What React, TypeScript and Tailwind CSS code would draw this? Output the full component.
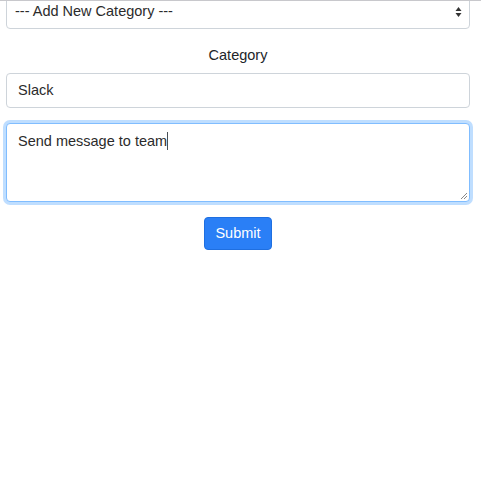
import React from "react";

export default function App() {
  return (
    <div
      className="min-h-[500px] bg-white border-t border-[#c8c8cc] overflow-hidden"
      style={{ fontFamily: '"Liberation Sans", Arial, sans-serif' }}
    >
      <form className="pl-[6px] pr-[11px] -mt-[7px] text-[14.5px] text-[#212529]">
        <div className="relative flex items-center h-[35px] px-[8px] border border-[#ced4da] rounded-[4px] bg-white text-[#2b2b2b] mb-[15px]">
          <span>--- Add New Category ---</span>
          <svg
            className="absolute right-[7px] top-1/2 -translate-y-1/2"
            width="7"
            height="12"
            viewBox="0 0 7 12"
          >
            <path d="M3.5 1 L6.5 5 L0.5 5 Z" fill="#333" />
            <path d="M3.5 11 L6.5 7 L0.5 7 Z" fill="#333" />
          </svg>
        </div>

        <label className="block text-center leading-[22px] mb-[7px]">
          Category
        </label>
        <div className="flex items-center h-[35px] px-[11px] border border-[#ced4da] rounded-[4px] bg-white text-[#2b2b2b] mb-[15px]">
          Slack
        </div>

        <div className="relative h-[79px] px-[11px] pt-[6px] border border-[#80bdff] rounded-[4px] bg-white text-[#2b2b2b] shadow-[0_0_0_3px_rgba(0,123,255,0.25)] mb-[15px]">
          <span className="leading-[22px]">Send message to team</span>
          <span className="inline-block align-middle w-px h-[18px] bg-[#495057] -mt-[2px]" />
          <svg
            className="absolute right-[1px] bottom-[1px]"
            width="8"
            height="8"
            viewBox="0 0 8 8"
          >
            <path d="M1 7 L7 1 M4 7 L7 4" stroke="#888" strokeWidth="1" />
          </svg>
        </div>

        <div className="flex justify-center">
          <button
            type="button"
            className="h-[33px] px-[10px] rounded-[4px] bg-[#2a7ff6] border border-[#1f6fe0] text-white text-[14.5px]"
          >
            Submit
          </button>
        </div>
      </form>
    </div>
  );
}
